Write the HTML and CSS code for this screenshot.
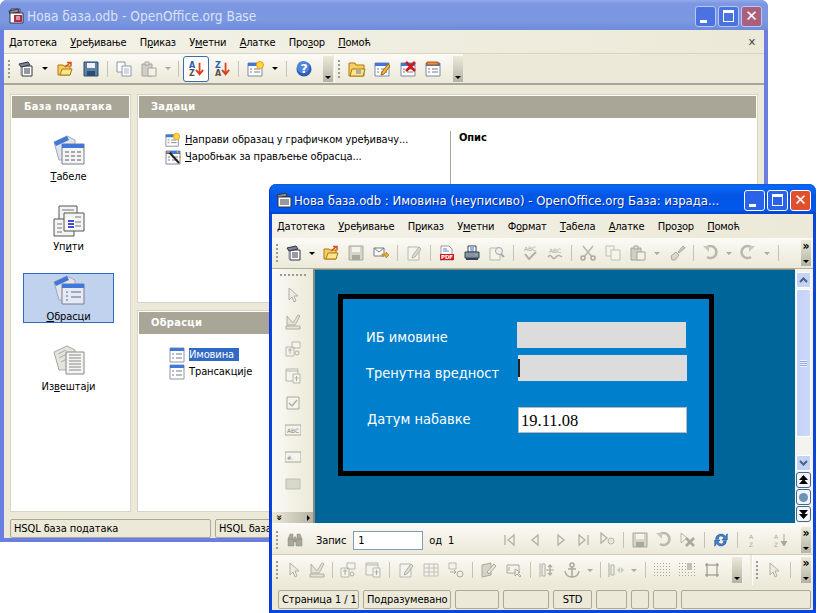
FILE: index.html
```html
<!DOCTYPE html>
<html lang="sr">
<head>
  <meta charset="UTF-8">
  <title>Нова база.odb</title>
  <link rel="stylesheet" href="styles.css">
</head>
<body>

<svg class="defs" xmlns="http://www.w3.org/2000/svg">
  <symbol id="i-app" viewBox="0 0 16 16"><path d="M3 1h9v3H3z" fill="#e8e8ee" stroke="#445"/><path d="M1 3l9-2 1 3-9 2z" fill="#889" stroke="#334"/><path d="M2 5h13v10H2z" fill="#fff" stroke="#334"/><path d="M6 7h8v7H6z" fill="#b02a4a"/><path d="M8 9h4M8 11h4" stroke="#fff"/></symbol>
  <symbol id="i-app2" viewBox="0 0 16 16"><path d="M1 3l9-2 1 3-9 2z" fill="#889" stroke="#334"/><path d="M2 5h13v10H2z" fill="#fff" stroke="#334"/><path d="M4 8h9M4 10h9M4 12h9" stroke="#334"/></symbol>
  <symbol id="i-new" viewBox="0 0 16 16"><path d="M4 5h10v10H4z" fill="#fff" stroke="#334"/><path d="M1 3l9-2 2 3-9 2z" fill="#7c8494" stroke="#334"/><path d="M3 6v8" stroke="#99a"/><path d="M6 8h6M6 10h6M6 12h6" stroke="#334"/></symbol>
  <symbol id="i-open" viewBox="0 0 16 16"><path d="M1 4h5l1 1h6v9H1z" fill="#f6cf5e" stroke="#a87a12"/><path d="M3 14l2-6h10l-2 6z" fill="#ffe48c" stroke="#a87a12"/><path d="M8 6l5-4M10 1.500h4v4" fill="none" stroke="#d8501c" stroke-width="1.500"/></symbol>
  <symbol id="i-save" viewBox="0 0 16 16"><path d="M1 1h14v14H1z" fill="#5c7fa4" stroke="#2b4d70"/><path d="M4 2h8v5H4z" fill="#eef"/><path d="M4 10h8v5H4z" fill="#2b4d70"/></symbol>
  <symbol id="i-copy" viewBox="0 0 16 16"><path d="M1 1h8v10H1z" fill="#fff" stroke="#8a94a8"/><path d="M6 5h9v10H6z" fill="#fff" stroke="#8a94a8"/><path d="M8 8h5M8 10h5M8 12h5" stroke="#a8b0c0"/></symbol>
  <symbol id="i-paste" viewBox="0 0 16 16"><path d="M1 3h10v12H1z" fill="#cfcfc6" stroke="#a4a49a"/><path d="M4 1h4v3H4z" fill="#e6e6dc" stroke="#a4a49a"/><path d="M7 7h8v8H7z" fill="#f2f2ea" stroke="#a4a49a"/></symbol>
  <symbol id="i-sortarrow" viewBox="0 0 18 18"><path d="M13 2v12M9 10l4 5 4-5" fill="none" stroke="#d8401c" stroke-width="2"/></symbol>
  <symbol id="i-form" viewBox="0 0 16 16"><path d="M1 2h14v13H1z" fill="#fff" stroke="#7f8aa0"/><path d="M1 2h14v3H1z" fill="#3f78d8"/><path d="M3 8h2M3 11h2M7 8h6M7 11h6" stroke="#778"/></symbol>
  <symbol id="i-formnew" viewBox="0 0 18 16"><use href="#i-form" width="16" height="16"/><circle cx="13" cy="4" r="3.500" fill="#ffd83c" stroke="#e8a010"/></symbol>
  <symbol id="i-formopen" viewBox="0 0 18 16"><path d="M1 2h6l1 2h8v11H1z" fill="#f6cf5e" stroke="#a87a12"/><path d="M2 15l2-7h13l-2 7z" fill="#ffe48c" stroke="#a87a12"/><path d="M8 10h5M8 12h5" stroke="#5a78b8"/></symbol>
  <symbol id="i-formedit" viewBox="0 0 16 16"><use href="#i-form" width="16" height="16"/><path d="M8 11l6-8 2 2-6 8-3 1z" fill="#f0b838" stroke="#a06818"/></symbol>
  <symbol id="i-formdel" viewBox="0 0 16 16"><use href="#i-form" width="16" height="16"/><path d="M6 1l9 9M15 1l-9 9" stroke="#d01818" stroke-width="2.500"/></symbol>
  <symbol id="i-formren" viewBox="0 0 16 16"><use href="#i-form" width="16" height="16"/><path d="M2 1h11v3H2z" fill="#f08840" stroke="#b05818"/></symbol>
  <symbol id="i-wizard" viewBox="0 0 16 16"><use href="#i-form" width="16" height="16"/><path d="M4 3l10 11" stroke="#222" stroke-width="2"/><path d="M2 3h3M12 2l1 2M14 8h2" stroke="#e8a010" stroke-width="1.500"/></symbol>
  <symbol id="i-help" viewBox="0 0 18 18"><circle cx="9" cy="9" r="8.500" fill="#2a5fb8"/><circle cx="8" cy="7" r="7" fill="#4f86d8"/></symbol>
  <symbol id="i-mail" viewBox="0 0 16 16"><path d="M1 3h10v8H1z" fill="#fff" stroke="#7a7a80"/><path d="M1 3l5 4 5-4" fill="none" stroke="#7a7a80"/><path d="M9 9h4V7l3 3-3 3v-2H9z" fill="#f0b030" stroke="#a06818" stroke-width=".6"/></symbol>
  <symbol id="i-pdf" viewBox="0 0 16 16"><path d="M2 1h8l3 3v12H2z" fill="#fff" stroke="#999"/><path d="M4 4h4M4 6h6" stroke="#6080c0"/><path d="M1 9h14v6H1z" fill="#d01818"/></symbol>
  <symbol id="i-print" viewBox="0 0 16 16"><path d="M4 1h8v6H4z" fill="#fff" stroke="#345"/><path d="M6 3h4M6 5h4" stroke="#36c"/><path d="M1 7h14v6H1z" fill="#8a93a0" stroke="#345"/><path d="M2 13h12v2H2z" fill="#345"/><path d="M11 9h2v1h-2z" fill="#6e4"/></symbol>
  <symbol id="i-g-edit" viewBox="0 0 16 16"><path d="M2 2h11v13H2z" fill="#f4f3ec" stroke="#b8b8ac"/><path d="M7 10l6-8 2 2-6 8-3 1z" fill="#dcdcd0" stroke="#b0b0a4"/></symbol>
  <symbol id="i-g-zoom" viewBox="0 0 16 16"><path d="M1 3h10v12H1z" fill="#f4f3ec" stroke="#b8b8ac"/><circle cx="10" cy="6" r="3.500" fill="#eee" stroke="#a8a89c"/><path d="M12 9l3 3" stroke="#a8a89c" stroke-width="2"/></symbol>
  <symbol id="i-g-check2" viewBox="0 0 16 16"><path d="M3 9l4 5 7-7" fill="none" stroke="#b0b0a4" stroke-width="2"/></symbol>
  <symbol id="i-g-wave" viewBox="0 0 16 16"><path d="M1 12q2-3 4 0t4 0 6 0" fill="none" stroke="#b0b0a4" stroke-width="1.500"/></symbol>
  <symbol id="i-g-cut" viewBox="0 0 16 16"><path d="M3 1l9 11M13 1L4 12" stroke="#b8b8ac" stroke-width="1.500"/><circle cx="3" cy="13" r="2" fill="none" stroke="#a8a89c" stroke-width="1.500"/><circle cx="13" cy="13" r="2" fill="none" stroke="#a8a89c" stroke-width="1.500"/></symbol>
  <symbol id="i-g-copy" viewBox="0 0 16 16"><path d="M1 1h8v10H1z" fill="#f4f3ec" stroke="#c0c0b4"/><path d="M6 5h9v10H6z" fill="#f4f3ec" stroke="#c0c0b4"/></symbol>
  <symbol id="i-g-brush" viewBox="0 0 16 16"><path d="M9 7l5-6 2 2-6 5z" fill="#c8c8bc" stroke="#a8a89c"/><path d="M2 11l5-4 3 3-4 5H3z" fill="#d8d8cc" stroke="#a8a89c"/></symbol>
  <symbol id="i-g-undo" viewBox="0 0 16 16"><path d="M4 3a6 6 0 1 1 1 9" fill="none" stroke="#b8b8ac" stroke-width="2.500"/><path d="M1 1h6v6z" fill="#c8c8bc"/></symbol>
  <symbol id="i-g-redo" viewBox="0 0 16 16"><path d="M12 3a6 6 0 1 0-1 9" fill="none" stroke="#b8b8ac" stroke-width="2.500"/><path d="M15 1H9v6z" fill="#c8c8bc"/></symbol>
  <symbol id="i-g-save" viewBox="0 0 16 16"><path d="M1 1h14v14H1z" fill="#d4d4c8" stroke="#a8a89c"/><path d="M4 2h8v5H4z" fill="#f4f3ec"/><path d="M4 10h8v5H4z" fill="#a8a89c"/></symbol>
  <symbol id="i-g-ptr" viewBox="0 0 16 16"><path d="M4 1v12l3-3 2 5 2-1-2-5h4z" fill="#eeede4" stroke="#b0b0a4"/></symbol>
  <symbol id="i-g-design" viewBox="0 0 16 16"><path d="M2 2l6 7 5-8 2 1-5 9H2zM1 12h14v3H1z" fill="#e4e3d8" stroke="#b0b0a4"/></symbol>
  <symbol id="i-g-ctl" viewBox="0 0 16 16"><path d="M1 6h8v9H1zM7 1h8v6H7z" fill="#f4f3ec" stroke="#b8b8ac"/><circle cx="12" cy="12" r="2" fill="none" stroke="#b0b0a4"/><path d="M5 7v6M3 9h4" stroke="#b0b0a4"/></symbol>
  <symbol id="i-g-ctl2" viewBox="0 0 16 16"><path d="M1 1h12v12H1z" fill="#f4f3ec" stroke="#b8b8ac"/><path d="M1 3h12" stroke="#b8b8ac"/><path d="M8 6h7v9H8z" fill="#f4f3ec" stroke="#b8b8ac"/><path d="M11.500 8v5M9.500 10h4" stroke="#b0b0a4"/></symbol>
  <symbol id="i-g-check" viewBox="0 0 16 16"><path d="M2 2h12v12H2z" fill="#f4f3ec" stroke="#a8a89c"/><path d="M4 8l3 3 5-6" fill="none" stroke="#b0b0a4" stroke-width="1.500"/></symbol>
  <symbol id="i-g-field" viewBox="0 0 16 16"><path d="M0 3h16v10H0z" fill="#f4f3ec" stroke="#a8a89c"/></symbol>
  <symbol id="i-g-btn" viewBox="0 0 16 16"><path d="M1 3h14v10H1z" fill="#d8d8cc" stroke="#bcbcb0"/></symbol>
  <symbol id="i-g-bino" viewBox="0 0 16 16"><path d="M1 7l2-5h3v5zM15 7l-2-5h-3v5zM1 7h6v7H1zM9 7h6v7H9zM7 5h2v5H7z" fill="#a8a89c" stroke="#88887c" stroke-width=".5"/></symbol>
  <symbol id="i-g-first" viewBox="0 0 16 16"><path d="M4 3v10M13 3L7 8l6 5z" fill="none" stroke="#b0b0a4" stroke-width="1.300"/></symbol>
  <symbol id="i-g-prev" viewBox="0 0 16 16"><path d="M11 3L5 8l6 5z" fill="none" stroke="#b0b0a4" stroke-width="1.300"/></symbol>
  <symbol id="i-g-next" viewBox="0 0 16 16"><path d="M5 3l6 5-6 5z" fill="none" stroke="#b0b0a4" stroke-width="1.300"/></symbol>
  <symbol id="i-g-last" viewBox="0 0 16 16"><path d="M12 3v10M3 3l6 5-6 5z" fill="none" stroke="#b0b0a4" stroke-width="1.300"/></symbol>
  <symbol id="i-g-newrec" viewBox="0 0 16 16"><path d="M2 1l6 5-6 5z" fill="none" stroke="#b0b0a4" stroke-width="1.300"/><circle cx="12" cy="9" r="3" fill="#e8e7dc" stroke="#b8b8ac"/></symbol>
  <symbol id="i-g-del" viewBox="0 0 16 16"><path d="M1 1l6 5-6 5z" fill="none" stroke="#b8b8ac"/><path d="M6 6l8 8M14 6l-8 8" stroke="#a8a89c" stroke-width="2.500"/></symbol>
  <symbol id="i-refresh" viewBox="0 0 18 18"><path d="M3 8a6 6 0 0 1 11-3l2-3v7h-6l2-2a3 3 0 0 0-6 1z" fill="#3f86d8" stroke="#1a4a90" stroke-width=".7"/><path d="M15 10a6 6 0 0 1-11 3l-2 3V9h6l-2 2a3 3 0 0 0 6-1z" fill="#3f86d8" stroke="#1a4a90" stroke-width=".7"/></symbol>
  <symbol id="i-g-arrow" viewBox="0 0 16 16"><path d="M13 2v10M10 9l3 5 3-5" fill="#a8a89c" stroke="#a8a89c"/></symbol>
  <symbol id="i-g-grid" viewBox="0 0 16 16"><path d="M1 2h14v12H1zM1 6h14M1 10h14M6 2v12M11 2v12" fill="#f4f3ec" stroke="#c0c0b4"/></symbol>
  <symbol id="i-g-tab" viewBox="0 0 16 16"><path d="M1 1h7v6H1z" fill="#f4f3ec" stroke="#b8b8ac"/><path d="M2 10h6M6 8l2 2-2 2" fill="none" stroke="#a8a89c"/><circle cx="12" cy="12" r="3" fill="none" stroke="#a8a89c"/></symbol>
  <symbol id="i-g-frm" viewBox="0 0 16 16"><path d="M1 3l9-2v12l-9 2z" fill="#d4d4c8" stroke="#a8a89c"/><path d="M6 10l7-8 2 2-7 8z" fill="#e8e7dc" stroke="#a8a89c"/></symbol>
  <symbol id="i-g-label" viewBox="0 0 16 16"><path d="M1 3h12v8H1z" fill="#f4f3ec" stroke="#a8a89c"/><path d="M3 5v4" stroke="#a8a89c"/><path d="M9 7v7l2-2 3 3 1-1-3-3 2-1z" fill="#eee" stroke="#a8a89c"/></symbol>
  <symbol id="i-g-pos" viewBox="0 0 16 16"><path d="M1 1v14M3 2h3v12H3z" fill="#eee" stroke="#b0b0a4"/><path d="M11 3v10M7 8h8M9 5l2-2 2 2M9 11l2 2 2-2" fill="none" stroke="#a8a89c" stroke-width="1.200"/></symbol>
  <symbol id="i-g-anchor" viewBox="0 0 16 16"><circle cx="8" cy="3" r="2" fill="none" stroke="#a8a89c" stroke-width="1.500"/><path d="M8 5v10M4 7h8M1 9q1 6 7 6t7-6" fill="none" stroke="#a8a89c" stroke-width="1.500"/></symbol>
  <symbol id="i-g-align" viewBox="0 0 16 16"><path d="M1 1v14" stroke="#a8a89c"/><path d="M3 3h3v10H3z" fill="#eee" stroke="#b0b0a4"/><path d="M9 8l3-3v6zM16 8l-3-3v6z" fill="#c8c8bc"/></symbol>
  <symbol id="i-g-dots" viewBox="0 0 16 16"><path d="M0 1.500h16M0 4.500h16M0 7.500h16M0 10.500h16M0 13.500h16" stroke="#a8a89c" stroke-dasharray="1 2"/></symbol>
  <symbol id="i-g-dots2" viewBox="0 0 16 16"><path d="M0 1.500h16M0 4.500h16M0 7.500h16M0 10.500h16M0 13.500h16" stroke="#a8a89c" stroke-dasharray="1 2"/><path d="M8 1h5v7H8z" fill="#c0c0b4"/></symbol>
  <symbol id="i-g-hash" viewBox="0 0 16 16"><path d="M3 1v14M13 1v14M1 3h14M1 13h14" stroke="#888878"/></symbol>
  <symbol id="i-table" viewBox="0 0 32 32"><path d="M1 7L14 1l8 4v20H6z" fill="#dfe4ee" stroke="#a0a8b8"/><path d="M1 7L14 1l2 4L3 11z" fill="#3f78d8"/><path d="M9 9h22v20H9z" fill="#f4f4f2" stroke="#7a7f88"/><path d="M9 9h22v4H9z" fill="#3f78d8"/><path d="M12 17h4M18 17h4M24 17h4M12 21h4M18 21h4M24 21h4M12 25h4M18 25h4M24 25h4" stroke="#8a8f98" stroke-width="1.500"/></symbol>
  <symbol id="i-query" viewBox="0 0 32 32"><path d="M6 1h18v15H6z" fill="#f4f4f2" stroke="#555"/><path d="M1 14h20v17H1z" fill="#f4f4f2" stroke="#555"/><path d="M11 8h20v18H11z" fill="#f4f4f2" stroke="#555"/><path d="M9 5h12M4 19h5M4 23h5M4 27h5M22 12h6M22 17h6M22 21h6" stroke="#777"/><path d="M14 13h8v12h-8z" fill="#fff"/><path d="M15 16h6M15 19h6M15 22h6" stroke="#4848d8" stroke-width="2"/></symbol>
  <symbol id="i-forms" viewBox="0 0 32 32"><path d="M1 7L14 1l8 4v20H6z" fill="#dfe4ee" stroke="#a0a8b8"/><path d="M1 7L14 1l2 4L3 11z" fill="#3f78d8"/><path d="M9 9h22v20H9z" fill="#e4ebf6" stroke="#7a7f88"/><path d="M9 9h22v4H9z" fill="#3f78d8"/><path d="M13 17h2M13 21h2M13 25h2M18 17h10M18 22h10" stroke="#667" stroke-width="1.200"/></symbol>
  <symbol id="i-report" viewBox="0 0 32 32"><path d="M1 7L14 1l8 4v20H6z" fill="#e4e4dc" stroke="#a8a8a0"/><path d="M5 9l8-4M6 13l8-4M8 17l6-3" stroke="#aaa"/><path d="M13 7h18v22H13z" fill="#f4f4f2" stroke="#888"/><path d="M16 10h12M16 13h12M16 16h12M16 19h12M16 22h12M16 25h12" stroke="#888"/></symbol>
  <symbol id="i-li-form" viewBox="0 0 16 16"><path d="M1 1h14v14H1z" fill="#fff" stroke="#8a94a8"/><path d="M1 1h14v3H1z" fill="#3f78d8"/><path d="M3 7h2M3 11h2M7 7h6M7 11h6" stroke="#778"/></symbol>
</svg>

<div class="window window-back">
  <div class="titlebar">
    <svg class="tb-app"><use href="#i-app"/></svg>
    <span class="tb-title">Нова база.odb - OpenOffice.org Base</span>
    <span class="wbtn wbtn-min"></span>
    <span class="wbtn wbtn-max"></span>
    <span class="wbtn wbtn-close">✕</span>
  </div>
  <div class="client">
    <div class="menubar">
      <span class="mi"><u>Д</u>атотека</span>
      <span class="mi"><u>У</u>ређивање</span>
      <span class="mi">П<u>р</u>иказ</span>
      <span class="mi">У<u>м</u>етни</span>
      <span class="mi"><u>А</u>латке</span>
      <span class="mi">Про<u>з</u>ор</span>
      <span class="mi"><u>П</u>омоћ</span>
      <span class="menu-x">✕</span>
    </div>
    <div class="toolbars toolbars-back">
      <div class="toolbar">
        <span class="grip"></span>
        <svg class="ic ml-8"><use href="#i-new"/></svg><span class="drop ml-8"></span>
        <svg class="ic ml-9"><use href="#i-open"/></svg>
        <svg class="ic ml-10"><use href="#i-save"/></svg>
        <span class="sep"></span>
        <svg class="ic"><use href="#i-copy"/></svg>
        <svg class="ic ml-9"><use href="#i-paste"/></svg><span class="drop drop-off ml-8"></span>
        <span class="sep sep-tight"></span>
        <span class="ic-on">
          <svg class="ic" viewBox="0 0 18 18"><use href="#i-sortarrow"/><text x="1" y="8" class="az az-b">A</text><text x="1" y="17" class="az az-g">Z</text></svg>
        </span>
        <svg class="ic ml-5" viewBox="0 0 18 18"><use href="#i-sortarrow"/><text x="1" y="8" class="az az-b">Z</text><text x="1" y="17" class="az az-g">A</text></svg>
        <span class="sep"></span>
        <svg class="ic ic-w"><use href="#i-formnew"/></svg><span class="drop ml-7"></span>
        <span class="sep"></span>
        <svg class="ic ic-w" viewBox="0 0 18 18"><use href="#i-help"/><text x="9" y="14" class="help-q">?</text></svg>
        <span class="overflow ml-10"></span>
      </div>
      <div class="toolbar toolbar-second">
        <span class="grip"></span>
        <svg class="ic ic-w ml-8"><use href="#i-formopen"/></svg>
        <svg class="ic ml-8"><use href="#i-formedit"/></svg>
        <svg class="ic ml-10"><use href="#i-formdel"/></svg>
        <svg class="ic ml-9"><use href="#i-formren"/></svg>
        <span class="overflow ml-12"></span>
      </div>
    </div>
    <div class="workspace">
      <aside class="panel sidebar">
        <h2 class="panel-head">База података</h2>
        <div class="nav-item"><svg class="nav-ic"><use href="#i-table"/></svg><span><u>Т</u>абеле</span></div>
        <div class="nav-item"><svg class="nav-ic"><use href="#i-query"/></svg><span>Уп<u>и</u>ти</span></div>
        <div class="nav-item nav-item-on"><svg class="nav-ic"><use href="#i-forms"/></svg><span><u>О</u>брасци</span></div>
        <div class="nav-item"><svg class="nav-ic"><use href="#i-report"/></svg><span>Из<u>в</u>ештаји</span></div>
      </aside>
      <div class="panels">
        <section class="panel tasks">
          <h2 class="panel-head">Задаци</h2>
          <div class="tasks-body">
            <ul class="task-list">
              <li><svg class="li-ic"><use href="#i-formnew"/></svg><span><u>Н</u>аправи образац у графичком уређивачу...</span></li>
              <li><svg class="li-ic"><use href="#i-wizard"/></svg><span><u>Ч</u>аробњак за прављење обрасца...</span></li>
            </ul>
            <div class="task-desc">Опис</div>
          </div>
        </section>
        <section class="panel forms">
          <h2 class="panel-head">Обрасци</h2>
          <ul class="form-list">
            <li><svg class="li-ic"><use href="#i-li-form"/></svg><span class="form-on">Имовина</span></li>
            <li><svg class="li-ic"><use href="#i-li-form"/></svg><span class="form-off">Трансакције</span></li>
          </ul>
        </section>
      </div>
    </div>
    <div class="statusbar statusbar-back">
      <span class="cell cell-a">HSQL база података</span>
      <span class="cell cell-b">HSQL база података</span>
    </div>
  </div>
</div>

<div class="window window-front">
  <div class="titlebar">
    <svg class="tb-app"><use href="#i-app2"/></svg>
    <span class="tb-title">Нова база.odb : Имовина (неуписиво) - OpenOffice.org База: израда...</span>
    <span class="wbtn wbtn-min"></span>
    <span class="wbtn wbtn-max"></span>
    <span class="wbtn wbtn-close">✕</span>
  </div>
  <div class="client">
    <div class="menubar">
      <span class="mi"><u>Д</u>атотека</span>
      <span class="mi"><u>У</u>ређивање</span>
      <span class="mi">П<u>р</u>иказ</span>
      <span class="mi">У<u>м</u>етни</span>
      <span class="mi">Ф<u>о</u>рмат</span>
      <span class="mi"><u>Т</u>абела</span>
      <span class="mi"><u>А</u>латке</span>
      <span class="mi">Про<u>з</u>ор</span>
      <span class="mi"><u>П</u>омоћ</span>
    </div>
    <div class="toolbars">
      <div class="toolbar toolbar-full">
        <span class="grip"></span>
        <svg class="ic ml-8"><use href="#i-new"/></svg><span class="drop ml-7"></span>
        <svg class="ic ml-8"><use href="#i-open"/></svg>
        <svg class="ic ml-9"><use href="#i-g-save"/></svg>
        <svg class="ic ml-9"><use href="#i-mail"/></svg>
        <span class="sep"></span>
        <svg class="ic"><use href="#i-g-edit"/></svg>
        <span class="sep"></span>
        <svg class="ic" viewBox="0 0 16 16"><use href="#i-pdf"/><text x="8" y="14.200" class="pdf">PDF</text></svg>
        <svg class="ic ml-9"><use href="#i-print"/></svg>
        <svg class="ic ml-9"><use href="#i-g-zoom"/></svg>
        <span class="sep"></span>
        <svg class="ic" viewBox="0 0 16 16"><use href="#i-g-check2"/><text x="8" y="6" class="abc">ABC</text></svg>
        <svg class="ic ml-9" viewBox="0 0 16 16"><use href="#i-g-wave"/><text x="8" y="8" class="abc">ABC</text></svg>
        <span class="sep"></span>
        <svg class="ic"><use href="#i-g-cut"/></svg>
        <svg class="ic ml-9"><use href="#i-g-copy"/></svg>
        <svg class="ic ml-9"><use href="#i-paste"/></svg><span class="drop drop-off ml-8"></span>
        <svg class="ic ml-9"><use href="#i-g-brush"/></svg>
        <span class="sep"></span>
        <svg class="ic"><use href="#i-g-undo"/></svg><span class="drop drop-off ml-8"></span>
        <svg class="ic ml-8"><use href="#i-g-redo"/></svg><span class="drop drop-off ml-8"></span>
        <span class="sep"></span>
        <span class="overflow overflow-more"><b>»</b></span>
      </div>
    </div>
    <div class="design">
      <div class="ctl-bar">
        <div class="ctl-grip"></div>
        <svg class="ctl"><use href="#i-g-ptr"/></svg>
        <svg class="ctl"><use href="#i-g-design"/></svg>
        <svg class="ctl"><use href="#i-g-ctl"/></svg>
        <svg class="ctl"><use href="#i-g-ctl2"/></svg>
        <svg class="ctl"><use href="#i-g-check"/></svg>
        <svg class="ctl" viewBox="0 0 16 16"><use href="#i-g-field"/><text x="8" y="10.500" class="abc abc-s">ABC</text></svg>
        <svg class="ctl" viewBox="0 0 16 16"><use href="#i-g-field"/><text x="5" y="10.500" class="abc abc-s">#.</text></svg>
        <svg class="ctl"><use href="#i-g-btn"/></svg>
        <div class="ctl-more"><b>»</b><span class="ctl-tri"></span></div>
      </div>
      <div class="canvas">
        <div class="form-box">
          <span class="f-label fl-1">ИБ имовине</span>
          <span class="f-input fi-1"></span>
          <span class="f-label fl-2">Тренутна вредност</span>
          <span class="f-input fi-2"><i class="caret"></i></span>
          <span class="f-label fl-3">Датум набавке</span>
          <span class="f-input fi-3">19.11.08</span>
        </div>
      </div>
      <div class="vscroll">
        <span class="sb-btn"><svg viewBox="0 0 9 6"><path d="M1 5l3.500-3.500L8 5" fill="none" stroke="#4d6185" stroke-width="2"/></svg></span>
        <span class="sb-thumb"><i></i></span>
        <span class="sb-track"></span>
        <span class="sb-btn"><svg viewBox="0 0 9 6"><path d="M1 1l3.500 3.500L8 1" fill="none" stroke="#4d6185" stroke-width="2"/></svg></span>
        <span class="sb-nav"><svg viewBox="0 0 9 10"><path d="M4.500 0L9 5H0zM4.500 4L9 9H0z"/></svg></span>
        <span class="sb-nav"><i class="sb-dot"></i></span>
        <span class="sb-nav"><svg viewBox="0 0 9 10"><path d="M4.500 10L0 5h9zM4.500 6L0 1h9z"/></svg></span>
      </div>
    </div>
    <div class="toolbar toolbar-full nav-bar">
      <span class="grip"></span>
      <svg class="ic ic-w ml-8"><use href="#i-g-bino"/></svg>
      <span class="nav-label">Запис</span>
      <span class="nav-input">1</span>
      <span class="nav-label nav-of">од&nbsp; 1</span>
      <span class="nav-gap"></span>
      <svg class="ic"><use href="#i-g-first"/></svg>
      <svg class="ic ml-10"><use href="#i-g-prev"/></svg>
      <svg class="ic ml-10"><use href="#i-g-next"/></svg>
      <svg class="ic ml-7"><use href="#i-g-last"/></svg>
      <svg class="ic ml-7"><use href="#i-g-newrec"/></svg>
      <span class="sep"></span>
      <svg class="ic"><use href="#i-g-save"/></svg>
      <svg class="ic ml-7"><use href="#i-g-undo"/></svg>
      <svg class="ic ml-9"><use href="#i-g-del"/></svg>
      <span class="sep"></span>
      <svg class="ic"><use href="#i-refresh"/></svg>
      <span class="sep"></span>
      <svg class="ic" viewBox="0 0 16 16"><text x="5" y="7" class="abc">A</text><text x="5" y="15" class="abc">Z</text></svg>
      <svg class="ic ml-9" viewBox="0 0 16 16"><use href="#i-g-arrow"/><text x="5" y="7" class="abc">A</text><text x="5" y="15" class="abc">Z</text></svg>
      <span class="overflow overflow-more"><b>»</b></span>
    </div>
    <div class="toolbars">
      <div class="toolbar toolbar-design">
        <span class="grip"></span>
        <svg class="ic ml-8"><use href="#i-g-ptr"/></svg>
        <svg class="ic ml-7"><use href="#i-g-design"/></svg>
        <span class="sep sep-thin"></span>
        <svg class="ic"><use href="#i-g-ctl"/></svg>
        <svg class="ic ml-9"><use href="#i-g-ctl2"/></svg>
        <span class="sep"></span>
        <svg class="ic"><use href="#i-g-edit"/></svg>
        <svg class="ic ml-9"><use href="#i-g-grid"/></svg>
        <svg class="ic ml-9"><use href="#i-g-tab"/></svg>
        <span class="sep"></span>
        <svg class="ic"><use href="#i-g-frm"/></svg>
        <svg class="ic ml-9"><use href="#i-g-label"/></svg>
        <span class="sep"></span>
        <svg class="ic"><use href="#i-g-pos"/></svg>
        <svg class="ic ml-9"><use href="#i-g-anchor"/></svg><span class="drop drop-off ml-7"></span>
        <span class="sep sep-thin"></span>
        <svg class="ic"><use href="#i-g-align"/></svg><span class="drop drop-off ml-7"></span>
        <span class="sep"></span>
        <svg class="ic"><use href="#i-g-dots"/></svg>
        <svg class="ic ml-9"><use href="#i-g-dots2"/></svg>
        <svg class="ic ml-9"><use href="#i-g-hash"/></svg>
        <span class="overflow ml-12"></span>
      </div>
      <div class="toolbar toolbar-tail">
        <span class="grip"></span>
        <svg class="ic ml-8"><use href="#i-g-ptr"/></svg>
        <span class="sep"></span>
        <span class="overflow overflow-more"><b>»</b></span>
      </div>
    </div>
    <div class="statusbar statusbar-front">
      <span class="cell c-1">Страница 1 / 1</span>
      <span class="cell c-2">Подразумевано</span>
      <span class="cell c-3"></span>
      <span class="cell c-4"></span>
      <span class="cell c-5">STD</span>
      <span class="cell c-6"></span>
      <span class="cell c-7"></span>
      <span class="cell c-8"></span>
      <span class="cell c-9"></span>
    </div>
  </div>
</div>

</body>
</html>
```

FILE: styles.css
```css
html, body {
  margin: 0;
  height: 100%;
  overflow: hidden;
}
body {
  font-family: "DejaVu Sans", sans-serif;
  font-stretch: condensed;
  font-size: 11px;
  letter-spacing: -.1px;
  background-color: #fff;
  color: #000;
}
.defs {
  position: absolute;
  width: 0;
  height: 0;
}
.az { font: bold 9px "DejaVu Sans", sans-serif; }
.az-b { fill: #2a5fb8; }
.az-g { fill: #555; }
.help-q { font: bold 14px "DejaVu Sans", sans-serif; fill: #fff; text-anchor: middle; }
.pdf { font: bold 5.500px "DejaVu Sans", sans-serif; fill: #fff; text-anchor: middle; }
.abc { font: 6px "DejaVu Sans", sans-serif; fill: #a8a89c; text-anchor: middle; }
.abc-s { fill: #888878; }

/* windows */
.window {
  position: absolute;
  display: flex;
  flex-direction: column;
  box-sizing: border-box;
  border-radius: 7px 7px 0 0;
  padding: 0 4px 4px;
}
.window-back {
  left: 0;
  top: 0;
  width: 768px;
  height: 542px;
  background: #6a7fe0;
}
.window-front {
  left: 269px;
  top: 184px;
  width: 547px;
  height: 429px;
  background: #0a46dc;
  border-left: 1px solid #0831d9;
  padding-left: 2px;
  padding-right: 3px;
  padding-bottom: 3px;
}
.titlebar {
  display: flex;
  align-items: center;
  height: 30px;
  flex: none;
  box-sizing: border-box;
  padding: 2px 1px 0 4px;
  margin: 0 -4px;
  border-radius: 7px 7px 0 0;
  background: linear-gradient(#93a8e8 0, #7d97e2 12%, #7a97e0 70%, #6f8bdc 100%);
  color: #d8e2f8;
  font-size: 13.600px;
  letter-spacing: 0;
}
.window-front .titlebar {
  margin: 0 -3px 0 -2px;
  padding-left: 2px;
  background: linear-gradient(#0a5ce0 0, #0a66f4 10%, #0355e4 40%, #0058ee 85%, #0044c8 100%);
  color: #fff;
  font-size: 13px;
  text-shadow: 1px 1px 0 #0a2a90;
}
.tb-app {
  width: 16px;
  height: 16px;
  margin: 0 3px 0 4px;
  flex: none;
}
.window-front .tb-app { margin-right: 2px; }
.tb-title {
  flex: 1;
  white-space: nowrap;
  overflow: hidden;
}
.wbtn {
  flex: none;
  box-sizing: border-box;
  width: 21px;
  height: 21px;
  margin-left: 2px;
  border: 1px solid #b8c8f0;
  border-radius: 3px;
  background: #4a72e0;
  color: #fff;
  position: relative;
  text-align: center;
  font: bold 15px/19px "DejaVu Sans", sans-serif;
  text-shadow: none;
}
.wbtn-min::after {
  content: "";
  position: absolute;
  left: 4px;
  bottom: 3px;
  width: 7px;
  height: 3px;
  background: #fff;
}
.wbtn-max::after {
  content: "";
  position: absolute;
  left: 4px;
  top: 3px;
  width: 9px;
  height: 8px;
  border: 1px solid #fff;
  border-top-width: 3px;
}
.wbtn-close { background: #a8607c; margin-right: 5px; }
.window-front .wbtn { background: #2a62e8; border-color: #fff; }
.window-front .wbtn-close { background: #e0502c; margin-right: 4px; }

.client {
  flex: 1;
  display: flex;
  flex-direction: column;
  min-height: 0;
  background: #ece9d8;
}

/* menu */
.menubar {
  display: flex;
  align-items: center;
  height: 24px;
  padding-top: 1px;
  box-sizing: border-box;
  flex: none;
  padding-left: 1px;
  background: linear-gradient(90deg, #f4f2e8, #ece9d8);
  border-bottom: 1px solid #d8d4c4;
}
.window-front .menubar { border-bottom: 0; }
.mi {
  padding: 0 4px;
  margin-right: 5.300px;
  letter-spacing: -.2px;
}
.menu-x {
  margin-left: auto;
  margin-right: 8px;
  font-weight: bold;
  font-size: 11px;
  color: #445;
}

/* toolbars */
.toolbars {
  display: flex;
  flex: none;
  height: 30px;
}
.toolbars-back {
  height: 31px;
  border-bottom: 2px solid #a8a698;
  box-sizing: border-box;
}
.toolbar {
  display: flex;
  align-items: center;
  height: 30px;
  padding-left: 4px;
  box-sizing: border-box;
  background: linear-gradient(180deg, #fbfaf5, #ece9d8);
}
.toolbars-back .toolbar { height: 29px; }
.toolbar-second { margin-left: 1px; border-left: 1px solid #fff; padding-left: 3px; }
.toolbar-full { flex: 1; }
.toolbar-design { width: 478px; flex: none; }
.toolbar-tail { flex: 1; margin-left: 2px; border-left: 1px solid #fff; padding-left: 3px; }
.grip {
  width: 2px;
  height: 18px;
  flex: none;
  background: repeating-linear-gradient(#9a9a90 0 2px, transparent 2px 4px);
}
.ic {
  width: 16px;
  height: 16px;
  flex: none;
}
.ic-w { width: 18px; }
.ic-on {
  display: flex;
  align-items: center;
  justify-content: center;
  box-sizing: border-box;
  width: 26px;
  height: 26px;
  flex: none;
  border: 1px solid #3a6ea5;
  border-radius: 3px;
  background: #fff;
}
.ml-5 { margin-left: 5px; }
.ml-7 { margin-left: 7px; }
.ml-8 { margin-left: 8px; }
.ml-9 { margin-left: 9px; }
.ml-10 { margin-left: 10px; }
.ml-12 { margin-left: 12px; }
.sep {
  width: 1px;
  height: 16px;
  flex: none;
  margin: 0 8px;
  background: #c4c2b4;
}
.sep-tight { margin: 0 4px 0 7px; }
.sep-thin { margin: 0 7px; }
.drop {
  width: 0;
  height: 0;
  flex: none;
  border: 3px solid transparent;
  border-top: 3px solid #000;
  border-bottom: 0;
}
.drop-off { border-top-color: #aaa99c; }
.overflow {
  position: relative;
  width: 10px;
  height: 26px;
  flex: none;
  background: linear-gradient(#ece9d8, #b4b2a4);
}
.overflow::after {
  content: "";
  position: absolute;
  left: 2px;
  bottom: 3px;
  border: 3px solid transparent;
  border-top: 3px solid #000;
  border-bottom: 0;
}
.overflow-more { margin-left: auto; margin-right: 2px; }
.overflow-more b {
  display: block;
  text-align: center;
  font-size: 12px;
  line-height: 12px;
  color: #000;
}

/* database window */
.workspace {
  flex: 1;
  display: flex;
  gap: 6px;
  padding: 9px 6px 6px;
  min-height: 0;
}
.panel {
  box-sizing: border-box;
  background: #fff;
  border: 1px solid #d8d5c5;
  padding: 1px;
}
.sidebar {
  width: 121px;
  flex: none;
}
.panels {
  flex: 1;
  display: flex;
  flex-direction: column;
  gap: 7px;
  min-width: 0;
}
.panel-head {
  margin: 0;
  height: 22px;
  line-height: 22px;
  padding-left: 12px;
  background: #a9a697;
  color: #fff;
  font-size: 11px;
  font-weight: bold;
  letter-spacing: .3px;
}
.nav-item {
  box-sizing: border-box;
  width: 91px;
  height: 50px;
  margin: 0 auto 20px 11px;
  padding-top: 1px;
  display: flex;
  flex-direction: column;
  align-items: center;
  border: 1px solid transparent;
  white-space: nowrap;
}
.sidebar .panel-head + .nav-item { margin-top: 15px; }
.nav-item-on {
  background: #c1d2ee;
  border-color: #316ac5;
}
.nav-ic {
  width: 32px;
  height: 32px;
  margin-bottom: 3px;
  flex: none;
}
.tasks {
  height: 209px;
  flex: none;
}
.forms { flex: 1; }
.tasks-body {
  display: flex;
  height: 70px;
  margin-top: 13px;
}
.task-list, .form-list {
  list-style: none;
  margin: 0;
  padding: 0;
}
.task-list {
  width: 312px;
  flex: none;
  padding-left: 26px;
  box-sizing: border-box;
  border-right: 1px solid #a9a697;
  white-space: nowrap;
}
.task-list li, .form-list li {
  display: flex;
  align-items: center;
  height: 17px;
}
.li-ic {
  width: 16px;
  height: 16px;
  margin-right: 4px;
  flex: none;
}
.task-desc {
  font-weight: bold;
  padding-left: 8px;
}
.form-list { padding: 12px 0 0 30px; }
.form-on {
  background: #316ac5;
  color: #fff;
  padding: 0 5px 0 0;
}

.statusbar {
  display: flex;
  align-items: center;
  gap: 4px;
  flex: none;
  height: 25px;
  padding: 0 2px 0 6px;
}
.statusbar-front { padding-top: 4px; box-sizing: border-box; }
.statusbar-back {
  height: 20px;
  padding: 1px 6px 0;
  box-sizing: border-box;
}
.cell {
  box-sizing: border-box;
  height: 19px;
  line-height: 18px;
  border: 1px solid #aaa897;
  border-radius: 2px;
  padding: 0 3px;
  white-space: nowrap;
  overflow: hidden;
}
.cell-a { width: 201px; }
.cell-b { flex: 1; }
.c-1 { width: 81px; }
.c-2 { width: 88px; }
.c-3 { width: 44px; }
.c-4 { width: 46px; }
.c-5 { width: 39px; text-align: center; }
.c-6 { width: 31px; }
.c-7 { width: 18px; }
.c-8 { width: 24px; }
.c-9 { flex: 1; }

/* design area */
.design {
  flex: 1;
  display: flex;
  min-height: 0;
  border-top: 1px solid #b0ae9e;
}
.ctl-bar {
  width: 41px;
  flex: none;
  display: flex;
  flex-direction: column;
  align-items: center;
  background: linear-gradient(90deg, #fbfaf5, #ece9d8);
  padding-top: 5px;
  box-sizing: border-box;
}
.ctl-grip {
  width: 26px;
  height: 2px;
  margin-bottom: 11px;
  background: repeating-linear-gradient(90deg, #9a9a90 0 2px, transparent 2px 4px);
}
.ctl {
  width: 16px;
  height: 16px;
  margin-bottom: 11px;
  flex: none;
}
.ctl-more {
  margin-top: auto;
  align-self: stretch;
  height: 11px;
  display: flex;
  justify-content: space-between;
  align-items: center;
  padding: 0 3px 0 5px;
  background: linear-gradient(90deg, #ece9d8, #b4b2a4);
  font-size: 10px;
}
.ctl-more b {
  display: block;
  transform: rotate(90deg);
}
.ctl-tri {
  border: 3px solid transparent;
  border-left: 3px solid #000;
  border-right: 0;
}
.canvas {
  flex: 1;
  min-width: 0;
  padding: 24px 0 0 23px;
  background: #006699;
  border-left: 2px solid #8a8a7c;
  border-top: 1px solid #8a8a7c;
}
.form-box {
  position: relative;
  box-sizing: border-box;
  width: 376px;
  height: 182px;
  border: 5px solid #000;
  background: #0080cc;
}
.f-label {
  position: absolute;
  color: #fff;
  font-size: 14.500px;
  letter-spacing: 0;
  white-space: nowrap;
}
.fl-1 { left: 23px; top: 30px; }
.fl-2 { left: 23px; top: 66px; }
.fl-3 { left: 24px; top: 112px; }
.f-input {
  position: absolute;
  box-sizing: border-box;
  width: 169px;
  height: 26px;
  background: #dcdcdc;
}
.fi-1 { left: 174px; top: 23px; }
.fi-2 { left: 175px; top: 56px; }
.fi-3 {
  left: 175px;
  top: 108px;
  background: #fff;
  border: 1px solid #b8b8b8;
  font-family: "Liberation Serif", serif;
  font-stretch: normal;
  font-size: 16.500px;
  letter-spacing: 0;
  line-height: 25px;
  padding-left: 2px;
}
.caret {
  position: absolute;
  left: 0;
  top: 4px;
  width: 2px;
  height: 18px;
  background: #222;
}

.vscroll {
  width: 18px;
  flex: none;
  box-sizing: border-box;
  padding: 3px 2px 1px 1px;
  display: flex;
  flex-direction: column;
  gap: 1px;
  background: #f4f3ee;
}
.sb-btn {
  box-sizing: border-box;
  height: 16px;
  flex: none;
  display: flex;
  align-items: center;
  justify-content: center;
  border: 1px solid #fff;
  border-radius: 2px;
  background: #c4d2f6;
}
.sb-btn svg { width: 9px; height: 6px; }
.sb-thumb {
  box-sizing: border-box;
  height: 148px;
  flex: none;
  display: flex;
  align-items: center;
  justify-content: center;
  border: 1px solid #fff;
  border-radius: 2px;
  background: linear-gradient(90deg, #c4d2f8, #ccd8fa);
}
.sb-thumb i {
  width: 7px;
  height: 7px;
  background: repeating-linear-gradient(#eef2fe 0 1px, #90a8e8 1px 2px);
}
.sb-track { flex: 1; }
.sb-nav {
  box-sizing: border-box;
  height: 16px;
  flex: none;
  display: flex;
  align-items: center;
  justify-content: center;
  border: 1px solid #3c6a90;
  border-radius: 3px;
  background: #f4f4f8;
}
.sb-nav svg { width: 9px; height: 10px; }
.sb-dot {
  width: 9px;
  height: 9px;
  border-radius: 50%;
  background: #6c94b4;
}

/* form navigation */
.nav-bar {
  flex: none;
  height: 32px;
  padding-top: 3px;
  border-bottom: 1px solid #cfccbc;
}
.nav-label { margin-left: 12px; white-space: nowrap; }
.nav-input {
  box-sizing: border-box;
  width: 70px;
  height: 19px;
  margin-left: 7px;
  padding-left: 4px;
  line-height: 17px;
  flex: none;
  background: #fff;
  border: 1px solid #7f9db9;
}
.nav-of { margin-left: 6px; }
.nav-gap { width: 47px; flex: none; }
```
